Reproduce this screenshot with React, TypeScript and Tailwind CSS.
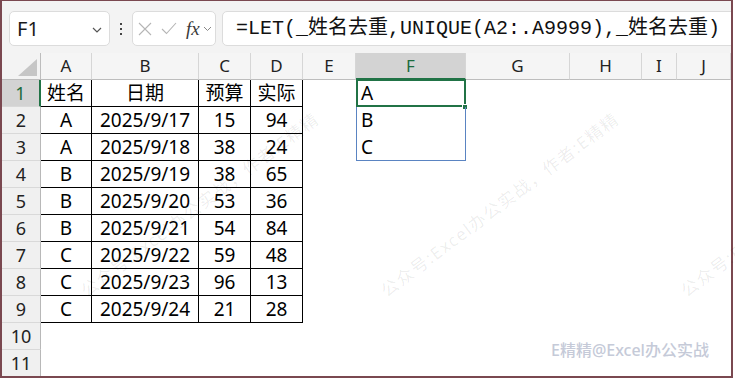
import React from 'react';

const colW = ['w-[39px]', 'w-[51px]', 'w-[107px]', 'w-[52px]', 'w-[52px]', 'w-[53px]', 'w-[110px]', 'w-[104px]', 'w-[72px]', 'w-[35px]', 'w-[54px]'];
const letters = ['', 'A', 'B', 'C', 'D', 'E', 'F', 'G', 'H', 'I', 'J'];

const table = [
  ['姓名', '日期', '预算', '实际'],
  ['A', '2025/9/17', '15', '94'],
  ['A', '2025/9/18', '38', '24'],
  ['B', '2025/9/19', '38', '65'],
  ['B', '2025/9/20', '53', '36'],
  ['B', '2025/9/21', '54', '84'],
  ['C', '2025/9/22', '59', '48'],
  ['C', '2025/9/23', '96', '13'],
  ['C', '2025/9/24', '21', '28'],
];

const unique = ['A', 'B', 'C'];

const cellFont = { fontFamily: '"Noto Sans", "Noto Sans CJK SC", sans-serif' };

const Toolbar = () => (
  <div className="h-[52px] bg-[#f3f3f3] flex items-start pt-[10px] pl-[7px]">
    {/* name box */}
    <div className="w-[101px] h-[35px] bg-white border border-[#dcdcdc] rounded-[5px] flex items-center pl-[7px] pr-[7px] justify-between">
      <span className="text-[20px] text-[#1a1a1a] leading-none">F1</span>
      <svg width="10" height="6" viewBox="0 0 10 6" className="mt-[2px]">
        <path d="M1 1 L5 5 L9 1" fill="none" stroke="#555" strokeWidth="1.2" />
      </svg>
    </div>
    {/* separator dots */}
    <div className="w-[22px] h-[35px] flex flex-col items-center justify-center gap-[3px]">
      <div className="w-[2px] h-[2px] bg-[#444]" />
      <div className="w-[2px] h-[2px] bg-[#444]" />
      <div className="w-[2px] h-[2px] bg-[#444]" />
    </div>
    {/* cancel / enter / fx */}
    <div className="w-[84px] h-[35px] bg-white border border-[#dcdcdc] rounded-[5px] flex items-center pl-[5px] gap-[9px]">
      <svg width="14" height="14" viewBox="0 0 14 14">
        <path d="M1 1 L13 13 M13 1 L1 13" stroke="#b5b5b5" strokeWidth="1.1" />
      </svg>
      <svg width="16" height="13" viewBox="0 0 16 13">
        <path d="M1 7 L5.5 11.5 L15 1" fill="none" stroke="#b5b5b5" strokeWidth="1.1" />
      </svg>
      <div className="flex items-center gap-[3px]">
        <span className="text-[19px] italic text-[#3a3a3a] leading-none" style={{ fontFamily: '"Liberation Serif", serif' }}>fx</span>
        <svg width="9" height="6" viewBox="0 0 9 6">
          <path d="M1 1 L4.5 4.5 L8 1" fill="none" stroke="#888" strokeWidth="1" />
        </svg>
      </div>
    </div>
    {/* formula input */}
    <div className="flex-1 h-[35px] ml-[6px] -mr-[12px] bg-white border border-[#dcdcdc] rounded-[5px] flex items-center pl-[13px] overflow-hidden">
      <span className="text-[20px] text-[#111] whitespace-nowrap leading-none" style={{ fontFamily: '"Liberation Mono", "Noto Sans CJK SC", monospace' }}>
        =LET(_姓名去重,UNIQUE(A2:.A9999),_姓名去重)
      </span>
    </div>
  </div>
);

const HeaderRow = () => (
  <div className="flex h-[27px]">
    {letters.map((l, i) => {
      if (i === 0) {
        return (
          <div key={i} className={`${colW[i]} shrink-0 bg-[#f3f3f3] border-r border-b border-[#bdbdbd] flex items-end justify-end pr-[3px] pb-[3px]`}>
            <svg width="19" height="17" viewBox="0 0 19 17">
              <path d="M19 0 L19 17 L0 17 Z" fill="#c6c6c6" />
            </svg>
          </div>
        );
      }
      const sel = l === 'F';
      return (
        <div
          key={i}
          className={`${colW[i]} shrink-0 flex items-center justify-center text-[17px] border-r border-[#d6d6d6] ${sel ? 'bg-[#d3d3d3] text-[#1b6b3d] border-b-2 border-b-[#217346]' : 'bg-[#f5f5f5] text-[#222] border-b border-b-[#bdbdbd]'}`}
        >
          {l}
        </div>
      );
    })}
  </div>
);

const Row = ({ r }: { r: number }) => {
  const rowSel = r === 1;
  const data = r <= 9 ? table[r - 1] : null;
  return (
    <div className="flex h-[27px]">
      <div
        className={`${colW[0]} shrink-0 flex items-center justify-center text-[18px] border-b border-b-[#d9d9d9] ${rowSel ? 'bg-[#d3d3d3] text-[#1b6b3d] border-r-2 border-r-[#217346]' : 'bg-[#f0f0f0] text-[#222] border-r border-r-[#b8b8b8]'}`}
      >
        {r}
      </div>
      {letters.slice(1).map((l, j) => {
        const c = j + 1;
        if (data && c <= 4) {
          return (
            <div key={c} className={`${colW[c]} shrink-0 flex items-center justify-center text-[19px] text-black border-r border-b border-black`}>
              {data[c - 1]}
            </div>
          );
        }
        if (l === 'F' && r <= 3) {
          return (
            <div
              key={c}
              className={`${colW[c]} shrink-0 relative flex items-center pl-[4px] text-[19px] text-black border-x border-[#5a84c2] ${r === 3 ? 'border-b' : ''}`}
            >
              {unique[r - 1]}
              {r === 1 && (
                <>
                  <div className="absolute -left-[1px] -top-[1px] -right-[1px] bottom-0 border-2 border-[#217346]" />
                  <div className="absolute -right-[3px] -bottom-[3px] w-[6px] h-[6px] bg-[#217346] border border-white" />
                </>
              )}
            </div>
          );
        }
        return <div key={c} className={`${colW[c]} shrink-0 bg-white`} />;
      })}
    </div>
  );
};

// faint diagonal watermark laid over the sheet
const Watermark = ({ left }: { left: number }) => (
  <div
    className="absolute top-[280px] whitespace-nowrap text-[17px] tracking-[1.5px] text-black/[0.08] origin-left -rotate-[37deg] select-none pointer-events-none"
    style={{ left, ...cellFont }}
  >
    公众号:Excel办公实战，作者:E精精
  </div>
);

export default function App() {
  return (
    <div className="w-[735px] h-[378px] bg-white relative overflow-hidden">
      <div className="w-[733px] h-[378px] border-2 border-t border-[#7a4850] overflow-hidden" style={cellFont}>
        <Toolbar />
        <HeaderRow />
        {Array.from({ length: 11 }, (_, i) => (
          <Row key={i} r={i + 1} />
        ))}
      </div>
      <Watermark left={83} />
      <Watermark left={383} />
      <Watermark left={683} />
      <div className="absolute left-[551px] top-[338px] text-[16px] font-medium text-[#c5cad8] whitespace-nowrap" style={cellFont}>
        E精精@Excel办公实战
      </div>
    </div>
  );
}
